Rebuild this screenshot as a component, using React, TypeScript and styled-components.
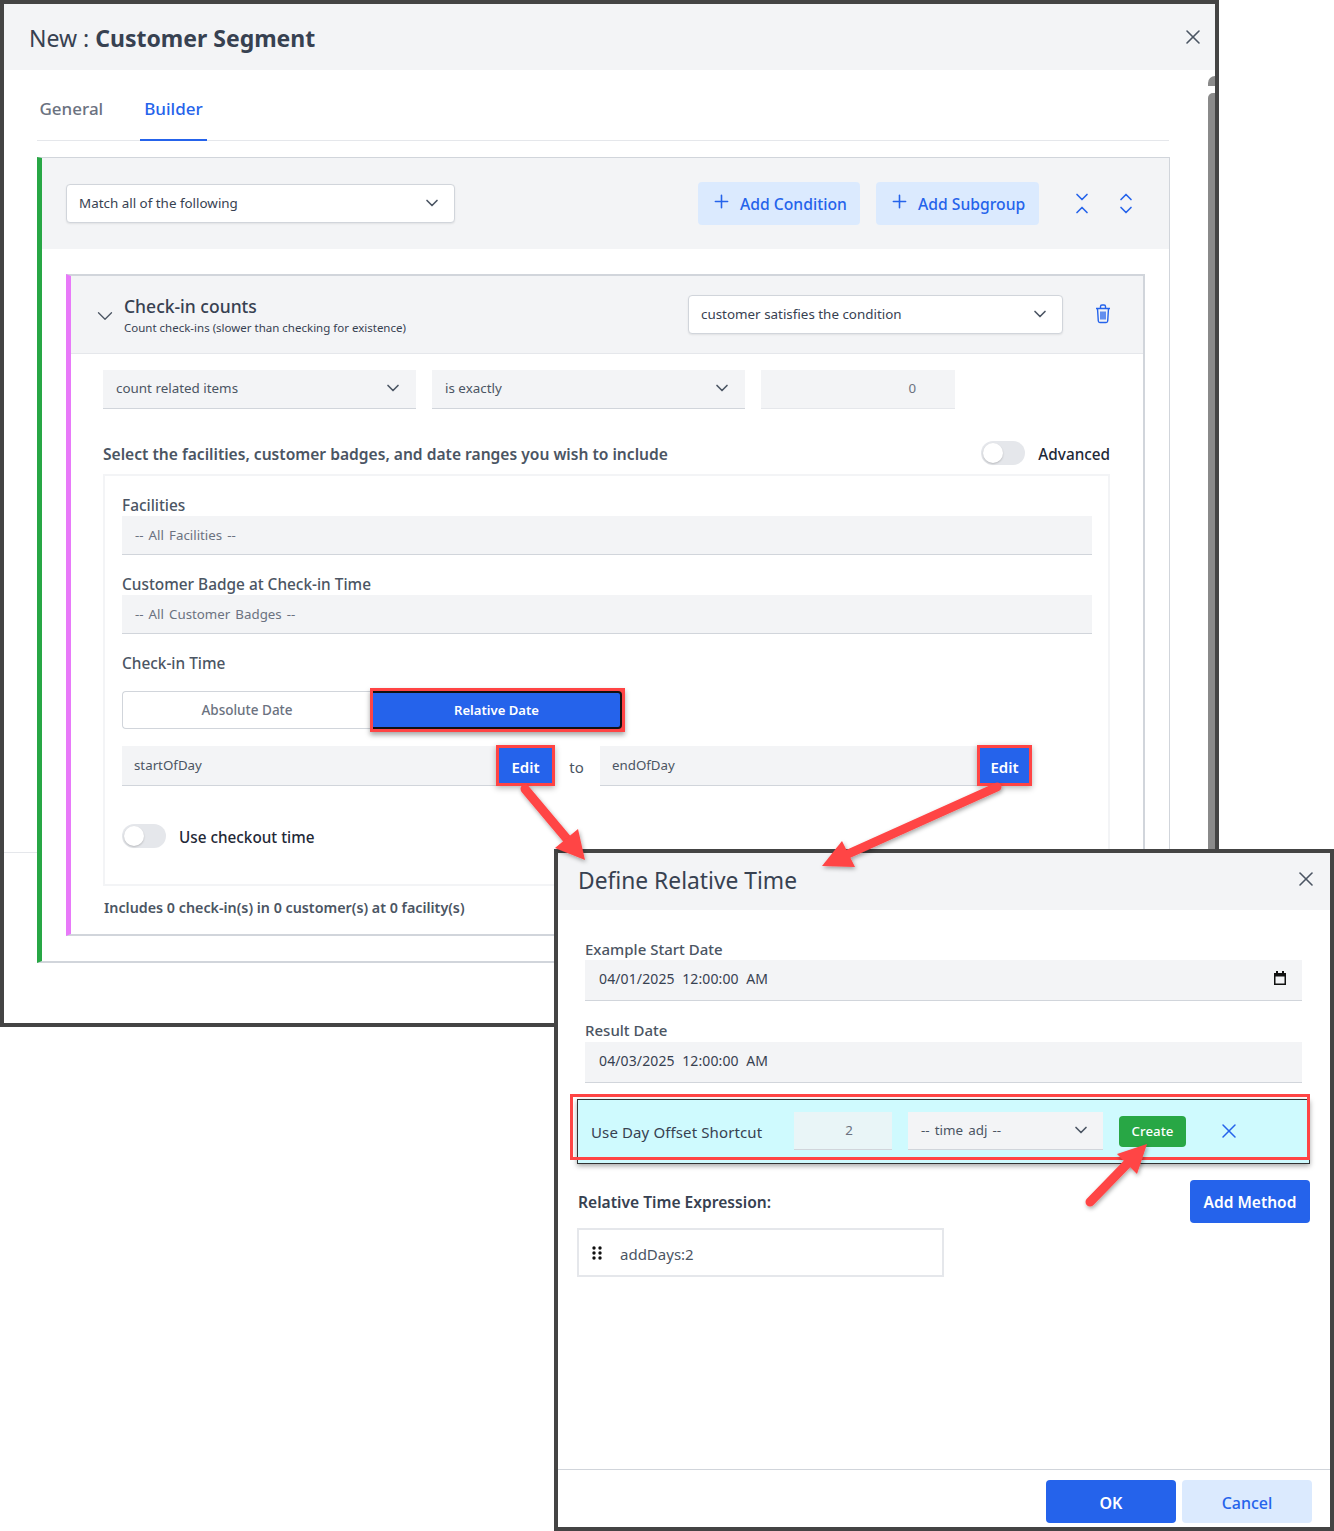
import React from 'react';
import styled, { createGlobalStyle } from 'styled-components';
import { ChevronDown, ChevronUp, Plus, X } from 'lucide-react';

const GlobalStyle = createGlobalStyle`
  html, body {
    margin: 0;
    padding: 0;
    background: #fff;
    font-family: "Noto Sans", "Open Sans", sans-serif;
    color: #374151;
  }
  * { box-sizing: border-box; }
`;

const Canvas = styled.div`
  position: relative;
  width: 1334px;
  height: 1531px;
  overflow: hidden;
`;

const MainWindow = styled.div`
  position: absolute;
  left: 0;
  top: 0;
  width: 1219px;
  height: 1027px;
  border: 4px solid #444;
  background: #fff;
  overflow: hidden;
`;

const WindowHeader = styled.div<{ $height: number }>`
  display: flex;
  align-items: center;
  justify-content: space-between;
  height: ${p => p.$height}px;
  background: #f3f4f6;
  padding: 0 10px 0 25px;
`;

const MainTitle = styled.div`
  padding-top: 2px;
  font-size: 23px;
  line-height: 30px;
  color: #374151;
  b { font-weight: 700; }
`;

const CloseButton = styled.span`
  display: flex;
  color: #4b5563;
`;

const FooterLine = styled.div`
  position: absolute;
  left: 0;
  right: 0;
  top: 848px;
  height: 1px;
  background: #e5e7eb;
`;

const ScrollTrack = styled.div`
  position: absolute;
  right: 0;
  top: 72px;
  bottom: 0;
  width: 7px;
  display: flex;
  flex-direction: column;
  gap: 7px;
`;

const ScrollArrow = styled.div`
  width: 7px;
  height: 10px;
  background: #8a8a8a;
  border-radius: 7px 0 0 0;
`;

const ScrollThumb = styled.div`
  flex: 1;
  width: 7px;
  background: #8a8a8a;
  border-radius: 5px 0 0 0;
`;

const Body = styled.div`
  position: relative;
  padding: 0 45px 0 33px;
`;

const Tabs = styled.div`
  display: flex;
  height: 71px;
  margin-right: 1px;
  border-bottom: 1px solid #e5e7eb;
  gap: 32px;
  padding-left: 2px;
`;

const Tab = styled.div<{ $active?: boolean }>`
  display: flex;
  align-items: flex-start;
  padding: 27px 4.5px 0;
  margin-left: ${p => (p.$active ? 0 : -4)}px;
  height: 71px;
  font-size: 17px;
  line-height: 24px;
  font-weight: 500;
  color: ${p => (p.$active ? '#2563eb' : '#6b7280')};
  border-bottom: 2px solid ${p => (p.$active ? '#2563eb' : 'transparent')};
`;

const Group = styled.div`
  margin-top: 16px;
  height: 806px;
  background: #fff;
  border: 1px solid #d1d5db;
  border-bottom-width: 2px;
  border-left: 5px solid #28a745;
`;

const GroupHeader = styled.div`
  display: flex;
  align-items: center;
  height: 91px;
  background: #f3f4f6;
  padding: 0 0 0 24px;
`;

const SelectBox = styled.div<{ $width: number; $flat?: boolean }>`
  display: flex;
  align-items: center;
  justify-content: space-between;
  width: ${p => p.$width}px;
  height: 39px;
  padding: 0 ${p => (p.$flat ? 13 : 12)}px 2px;
  font-size: 13.4px;
  color: ${p => (p.$flat ? '#4b5563' : '#374151')};
  background: ${p => (p.$flat ? '#f3f4f6' : '#fff')};
  border: ${p => (p.$flat ? 'none' : '1px solid #d1d5db')};
  border-bottom: 1px solid #d1d5db;
  border-radius: ${p => (p.$flat ? 0 : 4)}px;
  box-shadow: ${p => (p.$flat ? 'none' : '0 1px 2px rgba(0,0,0,0.08)')};
`;

const SoftButton = styled.div<{ $width: number; $ml: number }>`
  display: flex;
  align-items: center;
  gap: 8px;
  width: ${p => p.$width}px;
  height: 43px;
  margin-left: ${p => p.$ml}px;
  padding-left: 13px;
  border-radius: 4px;
  background: #dbeafe;
  color: #2563eb;
  font-size: 15.7px;
  font-weight: 500;
  svg { margin-top: -4px; }
`;

const ExpandIcons = styled.div`
  display: flex;
  gap: 24px;
  margin-left: 33px;
  color: #2563eb;
`;

const StackedChevrons = styled.div`
  display: flex;
  flex-direction: column;
  width: 20px;
  height: 26px;
  justify-content: center;
  svg { display: block; margin: -3.5px 0; }
`;

const Card = styled.div`
  margin: 25px 24px 0;
  height: 662px;
  border: 2px solid #d1d5db;
  border-left: 5px solid #e879f9;
`;

const CardHeader = styled.div`
  display: flex;
  align-items: center;
  height: 78px;
  background: #f3f4f6;
  border-bottom: 1px solid #e5e7eb;
  padding-left: 21px;
`;

const CardChevron = styled.span`
  display: flex;
  margin-top: 2px;
  color: #4b5563;
`;

const CardTitles = styled.div`
  margin-left: 6px;
  width: 564px;
  padding-top: 1px;
`;

const CardTitle = styled.div`
  font-size: 17.5px;
  line-height: 24px;
  font-weight: 500;
  color: #374151;
`;

const CardSubtitle = styled.div`
  margin-top: 2px;
  font-size: 11.5px;
  line-height: 16px;
  color: #374151;
`;

const TrashIcon = styled.svg`
  margin: -2px 0 0 32px;
  color: #2563eb;
`;

const CardBody = styled.div`
  padding: 16px 33px 0 32px;
`;

const CountRow = styled.div`
  display: flex;
  gap: 16px;
`;

const CountInput = styled.div`
  display: flex;
  align-items: center;
  justify-content: flex-end;
  width: 194px;
  height: 39px;
  padding: 0 39px 2px 0;
  font-size: 13.3px;
  color: #6b7280;
  background: #f3f4f6;
  border-bottom: 1px solid #e5e7eb;
`;

const InfoRow = styled.div`
  display: flex;
  align-items: center;
  justify-content: space-between;
  margin-top: 32px;
  height: 24px;
`;

const InfoLabel = styled.div`
  padding-top: 2px;
  font-size: 15.6px;
  font-weight: 600;
  color: #4b5563;
`;

const ToggleWrap = styled.div`
  display: flex;
  align-items: center;
  gap: 13px;
`;

const ToggleTrack = styled.div`
  width: 44px;
  height: 24px;
  padding: 2px;
  border-radius: 12px;
  background: #e5e7eb;
`;

const ToggleKnob = styled.div`
  width: 20px;
  height: 20px;
  border-radius: 50%;
  background: #fff;
  box-shadow: 0 1px 2px rgba(0,0,0,0.2);
`;

const ToggleLabel = styled.span`
  padding-top: 2px;
  font-size: 15.3px;
  font-weight: 500;
  color: #1f2937;
`;

const FilterBox = styled.div`
  margin-top: 9px;
  height: 412px;
  border: 2px solid #f3f4f6;
  padding: 10px 16px 0 17px;
`;

const FieldLabel = styled.div<{ $mt?: number }>`
  margin-top: ${p => p.$mt ?? 0}px;
  padding-top: 2px;
  font-size: 15.4px;
  line-height: 20px;
  font-weight: 500;
  color: #4b5563;
`;

const FlatInput = styled.div`
  display: flex;
  align-items: center;
  height: 39px;
  padding: 0 0 1px 13px;
  font-size: 13.3px;
  word-spacing: 1.6px;
  color: #6b7280;
  background: #f3f4f6;
  border-bottom: 1px solid #d1d5db;
`;

const Segments = styled.div`
  display: flex;
  margin-top: 17px;
  height: 38px;
`;

const SegmentOff = styled.div`
  display: flex;
  align-items: center;
  justify-content: center;
  width: 250px;
  margin-right: -2px;
  padding-right: 1px;
  font-size: 13.5px;
  font-weight: 500;
  color: #6b7280;
  border: 1px solid #d1d5db;
  border-right: none;
  border-radius: 4px 0 0 4px;
`;

const SegmentFrame = styled.div`
  width: 255px;
  height: 44px;
  margin-top: -3px;
  border: 3px solid #ff4444;
  background: #ff4444;
  box-shadow: 0 3px 5px rgba(0,0,0,0.35);
`;

const SegmentOn = styled.div`
  display: flex;
  align-items: center;
  justify-content: center;
  height: 100%;
  font-size: 13.1px;
  font-weight: 600;
  color: #fff;
  background: #2563eb;
  border: 2px solid #111;
  border-left: none;
  border-radius: 0 4px 4px 0;
`;

const DateRow = styled.div`
  display: flex;
  align-items: stretch;
  margin-top: 17px;
  height: 40px;
`;

const DateField = styled.div<{ $width: number }>`
  width: ${p => p.$width}px;
  padding: 10px 0 0 12px;
  font-size: 13.3px;
  line-height: 18px;
  color: #4b5563;
  background: #f3f4f6;
  border-bottom: 1px solid #d1d5db;
`;

const EditButton = styled.div<{ $width: number }>`
  display: flex;
  align-items: center;
  justify-content: center;
  width: ${p => p.$width}px;
  height: 35px;
  margin: 2px 3px 0;
  padding-top: 2px;
  font-size: 15px;
  font-weight: 600;
  color: #fff;
  background: #2563eb;
  outline: 3px solid #ff4444;
  box-shadow: 0 2px 6px 3px rgba(0,0,0,0.3);
`;

const ToWord = styled.div`
  display: flex;
  align-items: center;
  justify-content: center;
  width: 45px;
  padding: 1px 2px 0 0;
  font-size: 15px;
  color: #4b5563;
`;

const CheckoutRow = styled(ToggleWrap)`
  margin-top: 38px;
`;

const Summary = styled.div`
  margin-top: 12px;
  padding-left: 1px;
  font-size: 14.3px;
  line-height: 20px;
  font-weight: 600;
  color: #4b5563;
`;

const ModalWindow = styled.div`
  position: absolute;
  left: 554px;
  top: 849px;
  width: 780px;
  height: 682px;
  display: flex;
  flex-direction: column;
  border: 4px solid #444;
  background: #fff;
`;

const ModalTitle = styled.div`
  padding-top: 4px;
  font-size: 22.8px;
  line-height: 30px;
  color: #374151;
`;

const ModalHeader = styled(WindowHeader)`
  padding: 0 12px 6px 20px;
`;

const ModalBody = styled.div`
  position: relative;
  flex: 1;
  padding: 28px 20px 0 19px;
`;

const ModalLabel = styled.div<{ $mt?: number; $mb?: number }>`
  margin: ${p => p.$mt ?? 0}px 0 ${p => p.$mb ?? 0}px 8px;
  font-size: 15px;
  line-height: 22px;
  font-weight: 500;
  color: #4b5563;
`;

const DateInput = styled.div`
  display: flex;
  align-items: center;
  justify-content: space-between;
  height: 41px;
  margin: 0 8px;
  padding: 0 15px 4px 14px;
  font-size: 14px;
  letter-spacing: 0.12px;
  color: #374151;
  background: #f3f4f6;
  border-bottom: 1px solid #d1d5db;
  white-space: pre;
`;

const ShortcutRow = styled.div`
  display: flex;
  align-items: center;
  height: 65px;
  margin-top: 16px;
  padding: 0 0 1px 13px;
  background: #cffafe;
  border: 1px solid #333;
  box-shadow: 0 2px 5px rgba(0,0,0,0.35);
`;

const Highlight = styled.div`
  position: absolute;
  left: 12px;
  top: 184px;
  width: 740px;
  height: 66px;
  border: 3px solid #ff4444;
  pointer-events: none;
`;

const ShortcutLabel = styled.div`
  width: 203px;
  padding-top: 2px;
  font-size: 15px;
  letter-spacing: 0.12px;
  color: #374151;
`;

const ShortcutNumber = styled.div`
  display: flex;
  align-items: center;
  justify-content: center;
  width: 98px;
  height: 38px;
  padding: 0 0 2px 12px;
  font-size: 13.3px;
  color: #6b7280;
  background: #e9f5f7;
  border-bottom: 1px solid #d1d5db;
`;

const ShortcutSelect = styled(SelectBox)`
  margin-left: 16px;
  height: 38px;
  padding-right: 12px;
  word-spacing: 1.6px;
`;

const CreateButton = styled.div`
  display: flex;
  align-items: center;
  justify-content: center;
  width: 67px;
  height: 31px;
  margin-left: 16px;
  font-size: 13.3px;
  font-weight: 500;
  color: #fff;
  background: #28a745;
  border-radius: 4px;
`;

const CancelX = styled.span`
  display: flex;
  margin-left: 31px;
  color: #2563eb;
`;

const ExpressionRow = styled.div`
  display: flex;
  align-items: center;
  justify-content: space-between;
  margin-top: 16px;
  padding-left: 1px;
`;

const ExpressionLabel = styled.div`
  font-size: 15.6px;
  font-weight: 600;
  color: #374151;
`;

const AddMethod = styled.div`
  display: flex;
  align-items: center;
  justify-content: center;
  width: 120px;
  height: 43px;
  font-size: 15.5px;
  font-weight: 600;
  color: #fff;
  background: #2563eb;
  border-radius: 4px;
`;

const ExpressionChip = styled.div`
  display: flex;
  align-items: center;
  gap: 18px;
  width: 367px;
  height: 49px;
  margin-top: 5px;
  padding-left: 13px;
  font-size: 15px;
  color: #4b5563;
  border: 2px solid #e5e7eb;
`;

const ChipText = styled.span`
  padding-top: 2px;
`;

const ModalFooter = styled.div`
  display: flex;
  justify-content: flex-end;
  gap: 6px;
  height: 58px;
  padding: 10px 18px 0 0;
  border-top: 1px solid #d1d5db;
`;

const FooterButton = styled.div<{ $primary?: boolean }>`
  display: flex;
  align-items: center;
  justify-content: center;
  width: 130px;
  height: 43px;
  padding-top: 2px;
  font-size: 16px;
  font-weight: ${p => (p.$primary ? 600 : 500)};
  color: ${p => (p.$primary ? '#fff' : '#2563eb')};
  background: ${p => (p.$primary ? '#2563eb' : '#dbeafe')};
  border-radius: 4px;
`;

const ArrowLayer = styled.svg`
  position: absolute;
  left: 0;
  top: 0;
  pointer-events: none;
`;

const arrows = [
  { shaft: 'M525 789 L567 839', head: '585,860 578,829 555,848' },
  { shaft: 'M997 787 L848 854', head: '822,866 842,841 855,867' },
  { shaft: 'M1090 1202 L1127 1164', head: '1147,1144 1117,1154 1137,1174' },
];

const Chevron = () => <ChevronDown size={20} strokeWidth={2} color="#4b5563" />;

const App: React.FC = () => {
  return (
    <Canvas>
      <GlobalStyle />
      <MainWindow>
        <WindowHeader $height={66}>
          <MainTitle>
            New : <b>Customer Segment</b>
          </MainTitle>
          <CloseButton>
            <X size={24} strokeWidth={1.6} />
          </CloseButton>
        </WindowHeader>
        <FooterLine />
        <ScrollTrack>
          <ScrollArrow />
          <ScrollThumb />
        </ScrollTrack>
        <Body>
          <Tabs>
            <Tab>General</Tab>
            <Tab $active>Builder</Tab>
          </Tabs>
          <Group>
            <GroupHeader>
              <SelectBox $width={389}>
                Match all of the following
                <Chevron />
              </SelectBox>
              <SoftButton $width={162} $ml={243}>
                <Plus size={21} strokeWidth={1.8} />
                Add Condition
              </SoftButton>
              <SoftButton $width={163} $ml={16}>
                <Plus size={21} strokeWidth={1.8} />
                Add Subgroup
              </SoftButton>
              <ExpandIcons>
                <StackedChevrons>
                  <ChevronDown size={20} strokeWidth={2} />
                  <ChevronUp size={20} strokeWidth={2} />
                </StackedChevrons>
                <StackedChevrons>
                  <ChevronUp size={20} strokeWidth={2} />
                  <ChevronDown size={20} strokeWidth={2} />
                </StackedChevrons>
              </ExpandIcons>
            </GroupHeader>
            <Card>
              <CardHeader>
                <CardChevron>
                  <ChevronDown size={26} strokeWidth={1.2} />
                </CardChevron>
                <CardTitles>
                  <CardTitle>Check-in counts</CardTitle>
                  <CardSubtitle>Count check-ins (slower than checking for existence)</CardSubtitle>
                </CardTitles>
                <SelectBox $width={375}>
                  customer satisfies the condition
                  <Chevron />
                </SelectBox>
                <TrashIcon width="16" height="20" viewBox="0 0 16 20" fill="none" stroke="currentColor" strokeWidth="1.4">
                  <path d="M1 4.5h14M5.5 4V2.5A1.5 1.5 0 0 1 7 1h2a1.5 1.5 0 0 1 1.5 1.5V4" />
                  <path d="M2.5 4.5l.8 12.5a1.6 1.6 0 0 0 1.6 1.5h6.2a1.6 1.6 0 0 0 1.6-1.5l.8-12.5" />
                  <path d="M6 7.5v8M8 7.5v8M10 7.5v8" />
                </TrashIcon>
              </CardHeader>
              <CardBody>
                <CountRow>
                  <SelectBox $width={313} $flat>
                    count related items
                    <Chevron />
                  </SelectBox>
                  <SelectBox $width={313} $flat>
                    is exactly
                    <Chevron />
                  </SelectBox>
                  <CountInput>0</CountInput>
                </CountRow>
                <InfoRow>
                  <InfoLabel>Select the facilities, customer badges, and date ranges you wish to include</InfoLabel>
                  <ToggleWrap>
                    <ToggleTrack>
                      <ToggleKnob />
                    </ToggleTrack>
                    <ToggleLabel>Advanced</ToggleLabel>
                  </ToggleWrap>
                </InfoRow>
                <FilterBox>
                  <FieldLabel $mt={8}>Facilities</FieldLabel>
                  <FlatInput>-- All Facilities --</FlatInput>
                  <FieldLabel $mt={18}>Customer Badge at Check-in Time</FieldLabel>
                  <FlatInput>-- All Customer Badges --</FlatInput>
                  <FieldLabel $mt={18}>Check-in Time</FieldLabel>
                  <Segments>
                    <SegmentOff>Absolute Date</SegmentOff>
                    <SegmentFrame>
                      <SegmentOn>Relative Date</SegmentOn>
                    </SegmentFrame>
                  </Segments>
                  <DateRow>
                    <DateField $width={374}>startOfDay</DateField>
                    <EditButton $width={53}>Edit</EditButton>
                    <ToWord>to</ToWord>
                    <DateField $width={377}>endOfDay</DateField>
                    <EditButton $width={49}>Edit</EditButton>
                  </DateRow>
                  <CheckoutRow>
                    <ToggleTrack>
                      <ToggleKnob />
                    </ToggleTrack>
                    <ToggleLabel>Use checkout time</ToggleLabel>
                  </CheckoutRow>
                </FilterBox>
                <Summary>Includes 0 check-in(s) in 0 customer(s) at 0 facility(s)</Summary>
              </CardBody>
            </Card>
          </Group>
        </Body>
      </MainWindow>
      <ModalWindow>
        <ModalHeader $height={57}>
          <ModalTitle>Define Relative Time</ModalTitle>
          <CloseButton>
            <X size={24} strokeWidth={1.6} />
          </CloseButton>
        </ModalHeader>
        <ModalBody>
          <ModalLabel>Example Start Date</ModalLabel>
          <DateInput>
            04/01/2025  12:00:00  AM
            <svg width="14" height="14" viewBox="0 0 14 14">
              <path d="M3 0h2v2h4V0h2v2h2v12H1V2h2zM2.5 5.5v7h9v-7z" fill="#111" />
            </svg>
          </DateInput>
          <ModalLabel $mt={18} $mb={1}>Result Date</ModalLabel>
          <DateInput>04/03/2025  12:00:00  AM</DateInput>
          <ShortcutRow>
            <ShortcutLabel>Use Day Offset Shortcut</ShortcutLabel>
            <ShortcutNumber>2</ShortcutNumber>
            <ShortcutSelect $width={195} $flat>
              -- time adj --
              <Chevron />
            </ShortcutSelect>
            <CreateButton>Create</CreateButton>
            <CancelX>
              <X size={24} strokeWidth={1.5} />
            </CancelX>
          </ShortcutRow>
          <ExpressionRow>
            <ExpressionLabel>Relative Time Expression:</ExpressionLabel>
            <AddMethod>Add Method</AddMethod>
          </ExpressionRow>
          <ExpressionChip>
            <svg width="10" height="14" viewBox="0 0 10 14" fill="#111">
              <circle cx="2" cy="2" r="1.7" />
              <circle cx="8" cy="2" r="1.7" />
              <circle cx="2" cy="7" r="1.7" />
              <circle cx="8" cy="7" r="1.7" />
              <circle cx="2" cy="12" r="1.7" />
              <circle cx="8" cy="12" r="1.7" />
            </svg>
            <ChipText>addDays:2</ChipText>
          </ExpressionChip>
          <Highlight />
        </ModalBody>
        <ModalFooter>
          <FooterButton $primary>OK</FooterButton>
          <FooterButton>Cancel</FooterButton>
        </ModalFooter>
      </ModalWindow>
      <ArrowLayer width="1334" height="1531" viewBox="0 0 1334 1531">
        <defs>
          <filter id="arrowShadow" x="-30%" y="-30%" width="160%" height="160%">
            <feDropShadow dx="1" dy="2" stdDeviation="2" floodColor="#000" floodOpacity="0.35" />
          </filter>
        </defs>
        {arrows.map(a => (
          <g key={a.head} filter="url(#arrowShadow)">
            <path d={a.shaft} stroke="#ff4444" strokeWidth="9" strokeLinecap="round" fill="none" />
            <polygon points={a.head} fill="#ff4444" />
          </g>
        ))}
      </ArrowLayer>
    </Canvas>
  );
};

export default App;
